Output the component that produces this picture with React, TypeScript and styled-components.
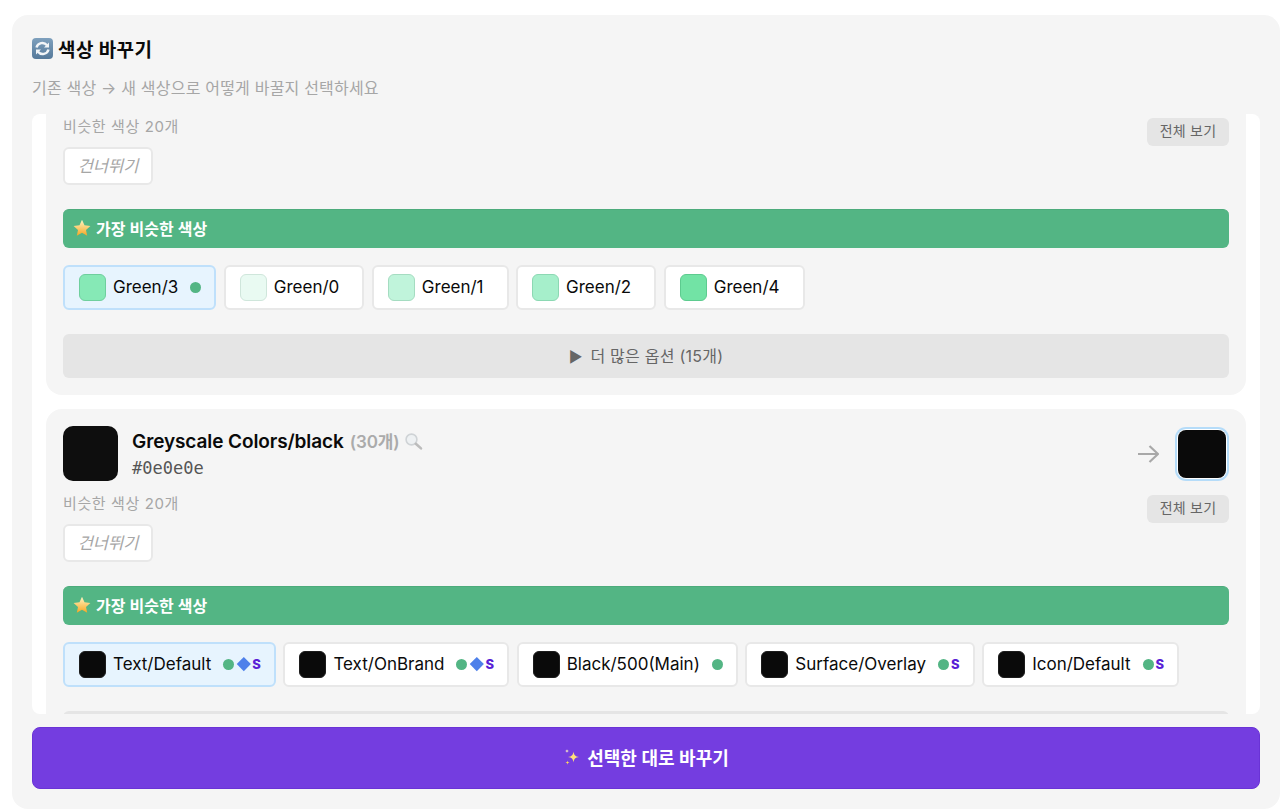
import React from "react";
import styled, { createGlobalStyle } from "styled-components";

const Global = createGlobalStyle`
  html, body { margin: 0; padding: 0; background: #fff; overflow: hidden; }
  body { font-family: Inter, "Noto Sans CJK KR", sans-serif; }
  button { font-family: inherit; }
`;

const Panel = styled.div`
  box-sizing: border-box;
  width: 1268px;
  height: 794px;
  margin: 15px 0 2px 12px;
  padding: 20px 20px;
  background: #f5f5f5;
  border-radius: 16px;
  display: flex;
  flex-direction: column;
`;
const Title = styled.h2`
  margin: 0;
  height: 26px;
  display: flex;
  align-items: center;
  gap: 5px;
  font-size: 19px;
  font-weight: 700;
  letter-spacing: 0.4px;
  color: #0a0a0a;
`;
const Subtitle = styled.p`
  margin: 16px 0 0;
  height: 23px;
  line-height: 23px;
  font-size: 16px;
  letter-spacing: 0.2px;
  color: #a6a6a6;
`;
const Scroll = styled.div`
  box-sizing: border-box;
  height: 600px;
  margin-top: 14px;
  padding: 0 14px;
  background: #fff;
  border-radius: 8px;
  overflow: hidden;
  display: flex;
  flex-direction: column;
  gap: 14px;
  flex: none;
`;
const Card = styled.section<{ $clipped?: boolean }>`
  box-sizing: border-box;
  flex: none;
  background: #f5f5f5;
  border-radius: ${(p) => (p.$clipped ? "0 0 16px 16px" : "16px")};
  padding: ${(p) => (p.$clipped ? "4px" : "17px")} 17px 17px;
`;
const Header = styled.div`
  display: flex;
  align-items: center;
  justify-content: space-between;
  height: 55px;
  margin-bottom: 14px;
`;
const Source = styled.div`
  display: flex;
  align-items: center;
  gap: 14px;
`;
const BigSwatch = styled.div`
  width: 55px;
  height: 55px;
  border-radius: 10px;
  background: #0e0e0e;
`;
const NameBlock = styled.div`
  padding-top: 2px;
`;
const NameLine = styled.div`
  display: flex;
  align-items: center;
  font-size: 19px;
  font-weight: 600;
  letter-spacing: -0.1px;
  line-height: 24px;
  color: #0a0a0a;
`;
const Count = styled.span`
  margin-left: 6px;
  color: #ababab;
  font-weight: 600;
  font-size: 17px;
`;
const Hex = styled.div`
  margin-top: 2px;
  font-family: "DejaVu Sans Mono", monospace;
  font-size: 17px;
  line-height: 24px;
  color: #555;
`;
const Target = styled.div`
  display: flex;
  align-items: center;
  gap: 19px;
  margin-right: 3px;
`;
const TargetSwatch = styled.div`
  width: 48px;
  height: 48px;
  border-radius: 8px;
  background: #0a0a0a;
  box-shadow: 0 0 0 1px #fff, 0 0 0 3px #b5dcf9;
`;
const Meta = styled.div`
  display: flex;
  justify-content: space-between;
  align-items: flex-start;
`;
const MetaLeft = styled.div`
  display: flex;
  flex-direction: column;
  align-items: flex-start;
`;
const MetaText = styled.span`
  height: 29px;
  padding-top: 1px;
  box-sizing: border-box;
  line-height: 16px;
  font-size: 15px;
  color: #a6a6a6;
  letter-spacing: 0.6px;
`;
const Skip = styled.button`
  box-sizing: border-box;
  width: 90px;
  height: 38px;
  padding: 0 0 3px;
  background: #fff;
  border: 2px solid #e8e8e8;
  border-radius: 6px;
  font-size: 16.5px;
  font-style: italic;
  color: #a6a6a6;
`;
const ViewAll = styled.button`
  box-sizing: border-box;
  width: 82px;
  height: 28px;
  padding: 0 0 4px;
  background: #e5e5e5;
  border: 0;
  border-radius: 6px;
  font-size: 14px;
  letter-spacing: 0.2px;
  color: #666;
`;
const Banner = styled.div`
  box-sizing: border-box;
  display: flex;
  align-items: center;
  gap: 5px;
  height: 39px;
  margin-top: 24px;
  padding: 0 0 2px 10px;
  background: #53b584;
  border-top: 1px solid #4cab7b;
  border-radius: 6px;
  font-size: 16px;
  font-weight: 600;
  color: #fff;
`;
const Chips = styled.div`
  display: flex;
  gap: 7.5px;
  margin-top: 17px;
`;
const Chip = styled.div<{ $selected?: boolean }>`
  box-sizing: border-box;
  height: 44.5px;
  display: flex;
  align-items: center;
  padding: 0 13px 0 14px;
  background: ${(p) => (p.$selected ? "#e7f4fe" : "#fff")};
  border: 2px solid ${(p) => (p.$selected ? "#bfe0fb" : "#e8e8e8")};
  border-radius: 6px;
  font-size: 17px;
  color: #0a0a0a;
  white-space: nowrap;
`;
const ChipSwatch = styled.span<{ $color: string; $edge: string }>`
  box-sizing: border-box;
  width: 27px;
  height: 27px;
  margin-right: 7px;
  border-radius: 6px;
  background: ${(p) => p.$color};
  border: 1.5px solid ${(p) => p.$edge};
  flex: none;
`;
const Badges = styled.span`
  display: flex;
  align-items: center;
  margin-left: 10px;
`;
const Dot = styled.span`
  width: 11px;
  height: 11px;
  margin-left: 2px;
  border-radius: 50%;
  background: #53b584;
`;
const Diamond = styled.span`
  width: 9.6px;
  height: 9.6px;
  margin: 0 1.5px 0 5px;
  background: #4e80ea;
  transform: rotate(45deg);
`;
const SBadge = styled.span`
  margin-left: 2px;
  font-size: 13px;
  font-weight: 800;
  color: #5a1fd6;
`;
const More = styled.button`
  display: block;
  width: 100%;
  height: 44.5px;
  margin-top: 24px;
  padding: 0 0 2px;
  border: 0;
  border-radius: 6px;
  background: #e5e5e5;
  font-size: 16px;
  letter-spacing: 0.25px;
  color: #666;
`;
const Caret = styled.span`
  margin-right: 3px;
  font-size: 15px;
`;
const Apply = styled.button`
  box-sizing: border-box;
  flex: none;
  display: flex;
  align-items: center;
  justify-content: center;
  gap: 6px;
  height: 62px;
  margin-top: 13px;
  padding: 0 0 2px;
  background: #743de0;
  border: 1px solid #6a33d6;
  border-radius: 8px;
  color: #fff;
  font-size: 18px;
  font-weight: 600;
`;

const RefreshIcon = () => (
  <svg width="21" height="21" viewBox="0 0 21 21">
    <defs>
      <linearGradient id="rf" x1="0" y1="0" x2="0" y2="1">
        <stop offset="0" stopColor="#7ea0bd" />
        <stop offset="1" stopColor="#55799a" />
      </linearGradient>
    </defs>
    <rect width="21" height="21" rx="4" fill="url(#rf)" />
    <path d="M4.5 9.5A6 6 0 0 1 15 7.2" fill="none" stroke="#f2f5f8" strokeWidth="2.4" />
    <path d="M17 4.5v5h-5z" fill="#f2f5f8" />
    <path d="M16.5 11.5A6 6 0 0 1 6 13.8" fill="none" stroke="#f2f5f8" strokeWidth="2.4" />
    <path d="M4 16.5v-5h5z" fill="#f2f5f8" />
  </svg>
);
const StarIcon = () => (
  <svg width="18" height="18" viewBox="0 0 18 18">
    <defs>
      <linearGradient id="st" x1="0" y1="0" x2="0" y2="1">
        <stop offset="0" stopColor="#fff6c4" />
        <stop offset="1" stopColor="#f6a623" />
      </linearGradient>
    </defs>
    <path d="M9 .8l2.5 5.4 5.9.7-4.4 4 1.2 5.8L9 13.8l-5.2 2.9L5 10.9.6 6.9l5.9-.7z" fill="url(#st)" />
  </svg>
);
const SearchIcon = () => (
  <svg width="19" height="19" viewBox="0 0 19 19" style={{ marginLeft: 4 }}>
    <circle cx="7.5" cy="7.5" r="5.4" fill="#eef1f3" stroke="#cfd3d6" strokeWidth="1.6" />
    <path d="M11.8 11.8l5.2 4.6" stroke="#bcbcbc" strokeWidth="2.6" strokeLinecap="round" />
  </svg>
);
const SparkleIcon = () => (
  <svg width="18" height="18" viewBox="0 0 18 18">
    <path d="M10.5 3.5c.5 3.6 1.7 4.9 5.5 5.5-3.8.6-5 1.9-5.5 5.5-.5-3.6-1.7-4.9-5.5-5.5 3.8-.6 5-1.9 5.5-5.5z" fill="#ffe07a" />
    <path d="M4 1c.2 1.4.7 1.9 2 2-1.3.2-1.8.7-2 2-.2-1.3-.7-1.8-2-2 1.3-.1 1.8-.6 2-2z" fill="#fff2c0" />
    <path d="M4.5 12.5c.2 1.4.7 1.9 2 2-1.3.2-1.8.7-2 2.2-.2-1.5-.7-2-2-2.2 1.3-.1 1.8-.6 2-2z" fill="#ffd95c" />
  </svg>
);
const ArrowIcon = () => (
  <svg width="21" height="18" viewBox="0 0 21 18" fill="none" stroke="#a8a8a8" strokeWidth="2.2">
    <path d="M0 9h19.5M11.5 1l8.5 8-8.5 8" />
  </svg>
);

type ChipData = { name: string; color: string; edge: string; selected?: boolean; dot?: boolean; diamond?: boolean; s?: boolean };

const greens: ChipData[] = [
  { name: "Green/3", color: "#86e9b6", edge: "#6fcf9e", selected: true, dot: true },
  { name: "Green/0", color: "#e9faf2", edge: "#cfe6db" },
  { name: "Green/1", color: "#c0f4db", edge: "#a5dcc1" },
  { name: "Green/2", color: "#a6efcb", edge: "#8cd8b3" },
  { name: "Green/4", color: "#72e3a5", edge: "#5dcb8f" },
];
const blacks: ChipData[] = [
  { name: "Text/Default", color: "#0a0a0a", edge: "#1c1c1c", selected: true, dot: true, diamond: true, s: true },
  { name: "Text/OnBrand", color: "#0a0a0a", edge: "#1c1c1c", dot: true, diamond: true, s: true },
  { name: "Black/500(Main)", color: "#0a0a0a", edge: "#1c1c1c", dot: true },
  { name: "Surface/Overlay", color: "#0a0a0a", edge: "#1c1c1c", dot: true, s: true },
  { name: "Icon/Default", color: "#0a0a0a", edge: "#1c1c1c", dot: true, s: true },
];

const Section = ({ chips, more }: { chips: ChipData[]; more?: string }) => (
  <>
    <Meta>
      <MetaLeft>
        <MetaText>비슷한 색상 20개</MetaText>
        <Skip>건너뛰기</Skip>
      </MetaLeft>
      <ViewAll>전체 보기</ViewAll>
    </Meta>
    <Banner>
      <StarIcon />
      가장 비슷한 색상
    </Banner>
    <Chips>
      {chips.map((c) => (
        <Chip key={c.name} $selected={c.selected}>
          <ChipSwatch $color={c.color} $edge={c.edge} />
          {c.name}
          <Badges>
            {c.dot && <Dot />}
            {c.diamond && <Diamond />}
            {c.s && <SBadge>S</SBadge>}
          </Badges>
        </Chip>
      ))}
    </Chips>
    <More>
      {more && (
        <>
          <Caret>▶</Caret> {more}
        </>
      )}
    </More>
  </>
);

export default function App() {
  return (
    <>
      <Global />
      <Panel>
        <Title>
          <RefreshIcon />
          색상 바꾸기
        </Title>
        <Subtitle>기존 색상 → 새 색상으로 어떻게 바꿀지 선택하세요</Subtitle>
        <Scroll>
          <Card $clipped>
            <Section chips={greens} more="더 많은 옵션 (15개)" />
          </Card>
          <Card>
            <Header>
              <Source>
                <BigSwatch />
                <NameBlock>
                  <NameLine>
                    Greyscale Colors/black
                    <Count>(30개)</Count>
                    <SearchIcon />
                  </NameLine>
                  <Hex>#0e0e0e</Hex>
                </NameBlock>
              </Source>
              <Target>
                <ArrowIcon />
                <TargetSwatch />
              </Target>
            </Header>
            <Section chips={blacks} />
          </Card>
        </Scroll>
        <Apply>
          <SparkleIcon />
          선택한 대로 바꾸기
        </Apply>
      </Panel>
    </>
  );
}
